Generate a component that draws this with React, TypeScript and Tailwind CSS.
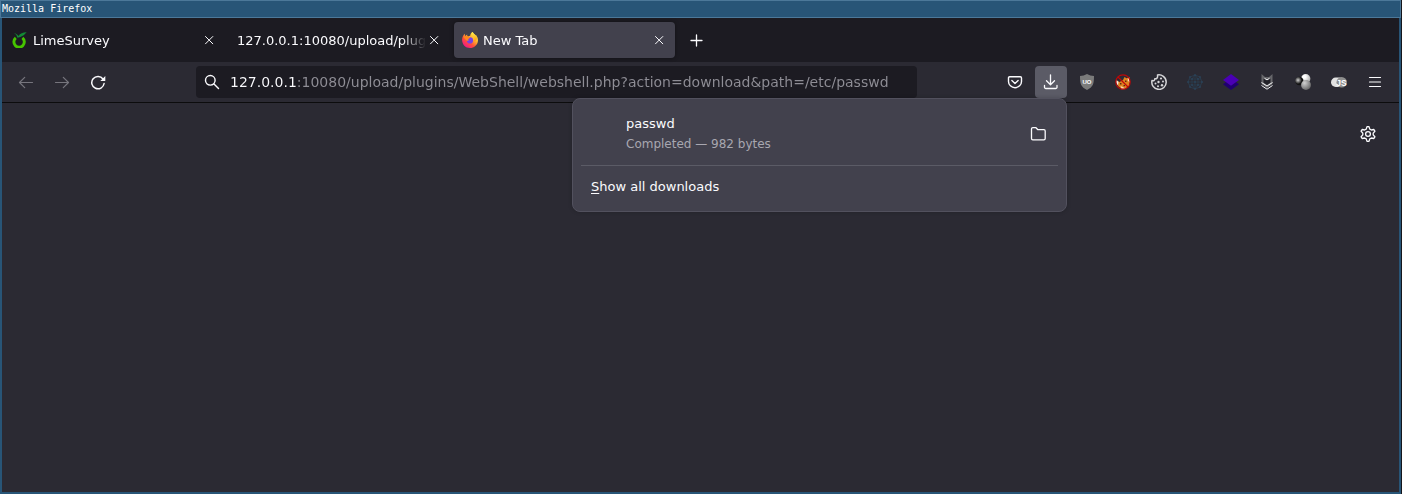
import type { ReactNode } from 'react';

const strokeProps = {
  fill: 'none',
  stroke: 'currentColor',
  strokeLinecap: 'round' as const,
  strokeLinejoin: 'round' as const,
};

function Icon({ children, className = 'size-4' }: { children: ReactNode; className?: string }) {
  return (
    <svg viewBox="0 0 16 16" className={`block shrink-0 ${className}`} aria-hidden="true">
      {children}
    </svg>
  );
}

function LimeIcon() {
  return (
    <Icon>
      <path d="M3.800 5.900A5.200 5.200 0 1 0 10.400 5.900" fill="none" stroke="#46c400" strokeWidth="2.900" />
      <path d="M2 1.200c2 .3 3.600 1.300 4.500 2.700C8.200 1.600 11 .2 14.700.3 12.900 2 11.500 4.200 8.300 4.900c-1.200.4-2.300.5-3.300.5C5.200 3.600 4 2 2 1.200z" fill="#128a35" />
    </Icon>
  );
}

function FirefoxIcon() {
  return (
    <Icon>
      <defs>
        <linearGradient id="flame" x1="0.85" y1="0.1" x2="0.2" y2="0.95">
          <stop offset="0" stopColor="#fff44f" />
          <stop offset="0.35" stopColor="#ffb02e" />
          <stop offset="0.65" stopColor="#ff4f3a" />
          <stop offset="1" stopColor="#f0148c" />
        </linearGradient>
        <linearGradient id="crest" x1="0.5" y1="0" x2="0.5" y2="1">
          <stop offset="0" stopColor="#fff44f" />
          <stop offset="1" stopColor="#ff980e" />
        </linearGradient>
      </defs>
      <path d="M15.400 5.400c-.3-.9-1-1.800-1.600-2.100.5 1 .7 1.700.8 2.300C13.700 3.300 12.200 2.400 11 .5 10.700.1 10.500-.2 10.400 0 8.900 1 8.300 2.600 8.200 3.700c-.8 0-1.500.3-2.200.7-.7-.3-1-1.200-.8-2-.9.400-1.500 1-2 1.600-.4-.5-.3-1.900-.3-2.200C1.300 3 .2 5.300.1 7.600-.1 12.100 3.400 16 8 16c4.100 0 7.400-3 7.900-6.800.2-1.300 0-2.600-.5-3.800z" fill="url(#flame)" />
      <circle cx="8" cy="8.400" r="3.100" fill="#7542e5" />
      <path d="M1.500 4.900c1.600-1.200 3.600-1 4.500-.5.5.3.900.6 1.900.7.200.9-.4 1.300-1.500 1.800-.4.700-.1 1.400.5 1.900-1.200.1-2.300-.2-2.900-.9z" fill="#ff8a1e" />
      <path d="M10.400 0c-.9 1.900-.3 3.300.7 4.400 1.200 1.300 1.600 3 .9 4.800 1.500-.2 3.300-1.700 3.200-3.800C14.500 3 11.400 2.200 10.400 0z" fill="url(#crest)" />
    </Icon>
  );
}

function CloseIcon() {
  return (
    <Icon>
      <path {...strokeProps} strokeWidth="1" d="m4.500 4.500 7.300 7.300m0-7.300-7.300 7.300" />
    </Icon>
  );
}

function UblockIcon() {
  return (
    <Icon>
      <path d="M8 0c2.200 1.200 4.500 2 7 2 0 8-1 11-7 14C2 13 1 10 1 2c2.500 0 4.800-.8 7-2z" fill="#7b7b7b" />
      <text x="8" y="10" textAnchor="middle" fontFamily="Liberation Sans, sans-serif" fontWeight="700" fontSize="6" fill="#fff">UO</text>
    </Icon>
  );
}

function FoxIcon() {
  return (
    <Icon>
      <path d="M2 6.500 4.500 8 8 6l1.500-3 2 1.200L14.500 3l.3 5-.8 4-3.500 2.500-4 .2L3 12z" fill="#e0801f" />
      <path d="M1 5.500 3.500 8 3 11.500 1.300 9z" fill="#f5efe2" />
      <path d="m13 3.500 1.800 2-.3 3-1.700-2z" fill="#f7e0bd" />
      <path d="m5.500 12 2.500 1 2.500 2-4 .3z" fill="#f3d6ae" />
      <path d="M5 9h1.500v1.500H5zM10 6.500h1.500V8H10zM8.500 11H10v1.200H8.500z" fill="#5a2c12" />
      <circle cx="8" cy="8" r="7.200" fill="none" stroke="#bd0808" strokeWidth="1.200" />
      <path d="m3 3 10 10" stroke="#bd0808" strokeWidth="1.200" />
    </Icon>
  );
}

function CookieIcon() {
  return (
    <Icon>
      <path {...strokeProps} stroke="#d6d6d9" strokeWidth="1.500" d="M6.500 1C10.500.2 15.200 3 15.200 8A7.200 7.200 0 1 1 1 6.500c1.500.8 2.800 0 2.800-1.700C5.800 5.200 7 3.500 6.500 1z" />
      <g fill="#d6d6d9">
        <circle cx="10" cy="4.500" r="1.100" />
        <circle cx="7.500" cy="8" r="1.200" />
        <circle cx="12" cy="7.500" r="1" />
        <circle cx="4.500" cy="9.500" r="1" />
        <circle cx="7" cy="12.300" r="1" />
        <circle cx="11" cy="11.300" r="1.200" />
      </g>
    </Icon>
  );
}

function GlobeIcon() {
  return (
    <Icon>
      <g fill="none" stroke="#2a3e4f" strokeWidth="0.800">
        <path d="m8 1 5 2 2 5-2 5-5 2-5-2-2-5 2-5zM1 8h14M8 1v14M2 5h12M2 11h12" />
        <path d="M8 1 5 5v6l3 4 3-4V5z" />
      </g>
      <g fill="#2b4760">
        <path d="M7.300.3h1.400v1.400H7.300zM7.300 14.300h1.400v1.400H7.300zM.3 7.300h1.400v1.400H.3zM14.300 7.300h1.400v1.400h-1.400zM4.300 4.300h1.400v1.400H4.300zM10.300 4.300h1.400v1.400h-1.400zM4.300 10.300h1.400v1.400H4.300zM10.300 10.300h1.400v1.400h-1.400zM7.300 7.300h1.400v1.400H7.300zM2.300 2.300h1.400v1.400H2.300zM12.300 2.300h1.400v1.400h-1.400zM2.300 12.300h1.400v1.400H2.300zM12.300 12.300h1.400v1.400h-1.400z" />
      </g>
    </Icon>
  );
}

function LayersIcon() {
  return (
    <Icon>
      <path d="M0 10.200 3 8h10l3 2.200L8 16z" fill="#20006f" />
      <path d="m8 0 8 5.900-8 5.900-8-5.900z" fill="#4a00b4" />
    </Icon>
  );
}

function WolfIcon() {
  return (
    <Icon>
      <path d="m2.500 0 3.500 3h4l3.500-3v10L8 14l-5.500-4z" fill="#66666a" />
      <path d="m4.500 4.500 3.500 2 3.500-2v4L8 11 4.500 8.500z" fill="#222128" />
      <path d="m5.500 4.300 2.500 1.500 2.500-1.500" fill="none" stroke="#e8e8ea" strokeWidth="1" />
      <path d="M2.500 8.500 8 12l5.500-3.500M2.500 11.500 8 15.200l5.500-3.700" fill="none" stroke="#f3f3f4" strokeWidth="1" />
    </Icon>
  );
}

function SpheresIcon() {
  return (
    <Icon>
      <defs>
        <radialGradient id="ballWhite" cx="0.35" cy="0.3" r="0.75">
          <stop offset="0.2" stopColor="#ffffff" />
          <stop offset="1" stopColor="#a5a5a5" />
        </radialGradient>
        <radialGradient id="ballGray" cx="0.35" cy="0.3" r="0.75">
          <stop offset="0" stopColor="#d0d0d0" />
          <stop offset="1" stopColor="#666666" />
        </radialGradient>
        <radialGradient id="ballBlack" cx="0.35" cy="0.4" r="0.65">
          <stop offset="0" stopColor="#d0d0d0" />
          <stop offset="0.7" stopColor="#111111" />
        </radialGradient>
      </defs>
      <circle cx="10.700" cy="4.800" r="4.700" fill="url(#ballWhite)" />
      <circle cx="4.300" cy="7" r="4.200" fill="url(#ballBlack)" />
      <circle cx="11" cy="11" r="4.900" fill="url(#ballGray)" />
    </Icon>
  );
}

function ScriptToggleIcon() {
  return (
    <Icon>
      <rect x="0" y="3.500" width="13" height="9.500" rx="4.700" fill="#e2e2e2" />
      <circle cx="10.700" cy="8.200" r="5.200" fill="#8e8e8e" />
      <text x="10.500" y="11.500" textAnchor="middle" fontFamily="Liberation Sans, sans-serif" fontWeight="700" fontSize="8.500" fill="#fff">JS</text>
    </Icon>
  );
}

interface TabProps {
  title: string;
  icon?: ReactNode;
  active?: boolean;
}

function Tab({ title, icon, active = false }: TabProps) {
  return (
    <div className={`flex h-9 w-[221px] items-center gap-[5px] rounded-sm px-2 ${active ? 'bg-[#42414d] shadow-[0_0_4px_rgba(0,0,0,0.4)]' : ''}`}>
      {icon}
      <button
        role="tab"
        aria-selected={active}
        className="-mr-[5px] min-w-0 flex-1 overflow-hidden pt-px text-left whitespace-nowrap [mask-image:linear-gradient(to_left,transparent,black_24px)]"
      >
        {title}
      </button>
      <button aria-label={`Close ${title}`}>
        <CloseIcon />
      </button>
    </div>
  );
}

function ToolButton({ label, children, disabled = false, open }: { label: string; children: ReactNode; disabled?: boolean; open?: boolean }) {
  return (
    <button
      aria-label={label}
      aria-expanded={open}
      disabled={disabled}
      className={`flex size-8 items-center justify-center rounded-sm disabled:text-[#76757d] ${open ? 'bg-[#5b5b66]' : ''}`}
    >
      {children}
    </button>
  );
}

function DownloadsPanel() {
  return (
    <section
      aria-label="Downloads"
      className="absolute top-full right-0 z-10 w-[495px] rounded-lg border border-[#52515e] bg-[#42414d] p-2 shadow-[0_0_4px_rgba(0,0,0,0.2)]"
    >
      <div className="flex items-center pt-[7px] pr-1 pb-[11px] pl-[45px]">
        <div className="min-w-0 flex-1">
          <p className="leading-5">passwd</p>
          <p className="text-xs leading-5 text-[#a8a7b0]">Completed — 982 bytes</p>
        </div>
        <button aria-label="Open containing folder" className="flex size-8 items-center justify-center">
          <Icon>
            <path {...strokeProps} strokeWidth="1.300" d="M1.500 3A1.300 1.300 0 0 1 2.800 1.700h3.200L7.900 3.700h6a1.300 1.300 0 0 1 1.300 1.300v7.600a1.300 1.300 0 0 1-1.300 1.300H2.800a1.300 1.300 0 0 1-1.300-1.300z" />
          </Icon>
        </button>
      </div>
      <hr className="border-[#5b5b66]" />
      <button className="mt-[5px] block w-full px-2.5 py-1.5 text-left leading-5">
        <span className="underline underline-offset-2">S</span>how all downloads
      </button>
    </section>
  );
}

export default function App() {
  return (
    <div className="flex min-h-screen flex-col bg-[#16161b] pr-px font-['DejaVu_Sans',sans-serif] text-[13px] text-[#fbfbfe]">
      <header className="h-[18px] border border-[#4c7899] bg-[#285577] px-px font-['DejaVu_Sans_Mono',monospace] text-[10px] leading-[15px] text-white">
        Mozilla Firefox
      </header>
      <div className="flex flex-1 flex-col border-x-2 border-b-2 border-[#285577] bg-[#2b2a33]">
        <div className="flex h-11 items-center bg-[#1c1b22] px-0.5">
          <div role="tablist" className="flex gap-1">
            <Tab title="LimeSurvey" icon={<LimeIcon />} />
            <Tab title="127.0.0.1:10080/upload/plug" />
            <Tab title="New Tab" icon={<FirefoxIcon />} active />
          </div>
          <button aria-label="Open a new tab" className="ml-1.5 flex size-8 items-center justify-center">
            <Icon>
              <path {...strokeProps} strokeWidth="1.300" d="M7.500 3v11M2 8.500h11" />
            </Icon>
          </button>
        </div>

        <nav aria-label="Navigation" className="flex h-[41px] items-start border-b border-[#0c0c0d] px-2 pt-1">
          <div className="flex gap-1">
            <ToolButton label="Back" disabled>
              <Icon><path {...strokeProps} strokeWidth="1.200" d="M14.500 8.500h-13M6.700 3.300 1.500 8.500l5.200 5.200" /></Icon>
            </ToolButton>
            <ToolButton label="Forward" disabled>
              <Icon><path {...strokeProps} strokeWidth="1.200" d="M1.500 8.500h13M9.300 3.300l5.200 5.200-5.200 5.200" /></Icon>
            </ToolButton>
            <ToolButton label="Reload">
              <Icon>
                <path {...strokeProps} strokeWidth="1.500" d="M13 5A6.200 6.200 0 1 0 14.100 9.500" />
                <path d="M15.300 2v4.500a.5.500 0 0 1-.5.500h-4.500z" fill="currentColor" />
              </Icon>
            </ToolButton>
          </div>

          <form className="mx-[82px] flex h-8 min-w-0 flex-1 items-center rounded-sm bg-[#1c1b22] px-2">
            <Icon>
              <circle {...strokeProps} strokeWidth="1.400" cx="6.300" cy="6.300" r="4.800" />
              <path {...strokeProps} strokeWidth="1.400" d="m10 10 4.500 4.500" />
            </Icon>
            <input
              aria-label="Search or enter address"
              defaultValue="127.0.0.1:10080/upload/plugins/WebShell/webshell.php?action=download&path=/etc/passwd"
              className="ml-2.5 min-w-0 flex-1 bg-[linear-gradient(to_right,#fbfbfe_67px,#8f8e96_67px)] bg-clip-text text-sm text-transparent caret-white outline-none"
            />
          </form>

          <div className="flex gap-1">
            <ToolButton label="Save to Pocket">
              <Icon>
                <path {...strokeProps} strokeWidth="1.400" d="M2.700 2.700h10.600a1.200 1.200 0 0 1 1.200 1.200V7.400a6.500 6.300 0 0 1-13 0V3.900a1.200 1.200 0 0 1 1.200-1.200z" />
                <path {...strokeProps} strokeWidth="1.400" d="M4.900 6.500 8 9.400l3.100-2.900" />
              </Icon>
            </ToolButton>
            <div className="relative">
              <ToolButton label="Downloads" open>
                <Icon>
                  <path {...strokeProps} strokeWidth="1.300" d="M7.500.8v9.700M3.500 6.800l4 4 4-4M1.500 11.500v1.700a1.300 1.300 0 0 0 1.300 1.300h9.900a1.300 1.300 0 0 0 1.300-1.300v-1.700" />
                </Icon>
              </ToolButton>
              <DownloadsPanel />
            </div>
            <ToolButton label="uBlock Origin"><UblockIcon /></ToolButton>
            <ToolButton label="FoxyProxy"><FoxIcon /></ToolButton>
            <ToolButton label="Cookie editor"><CookieIcon /></ToolButton>
            <ToolButton label="Network"><GlobeIcon /></ToolButton>
            <ToolButton label="Layers"><LayersIcon /></ToolButton>
            <ToolButton label="Wappalyzer"><WolfIcon /></ToolButton>
            <ToolButton label="Containers"><SpheresIcon /></ToolButton>
            <ToolButton label="Toggle scripts"><ScriptToggleIcon /></ToolButton>
            <ToolButton label="Application menu">
              <Icon><path {...strokeProps} strokeWidth="1.200" d="M2.500 3.500h11M2.500 8h11M2.500 12.500h11" /></Icon>
            </ToolButton>
          </div>
        </nav>

        <main className="flex flex-1 items-start justify-end px-[15px] pt-[15px]">
          <button aria-label="Customize new tab" className="flex size-8 items-center justify-center">
            <Icon>
              <circle {...strokeProps} strokeWidth="1.300" cx="8" cy="8" r="2.400" />
              <path {...strokeProps} strokeWidth="1.300" d="M7 .7h2l.8 2.400 1.600.9 2.500-.5 1 1.700L13.200 7.100v1.800l1.700 1.900-1 1.700-2.500-.5-1.600.9L9 15.300H7l-.8-2.400-1.600-.9-2.500.5-1-1.700L2.800 8.900V7.100L1.100 5.200l1-1.700 2.500.5 1.600-.9z" />
            </Icon>
          </button>
        </main>
      </div>
    </div>
  );
}
